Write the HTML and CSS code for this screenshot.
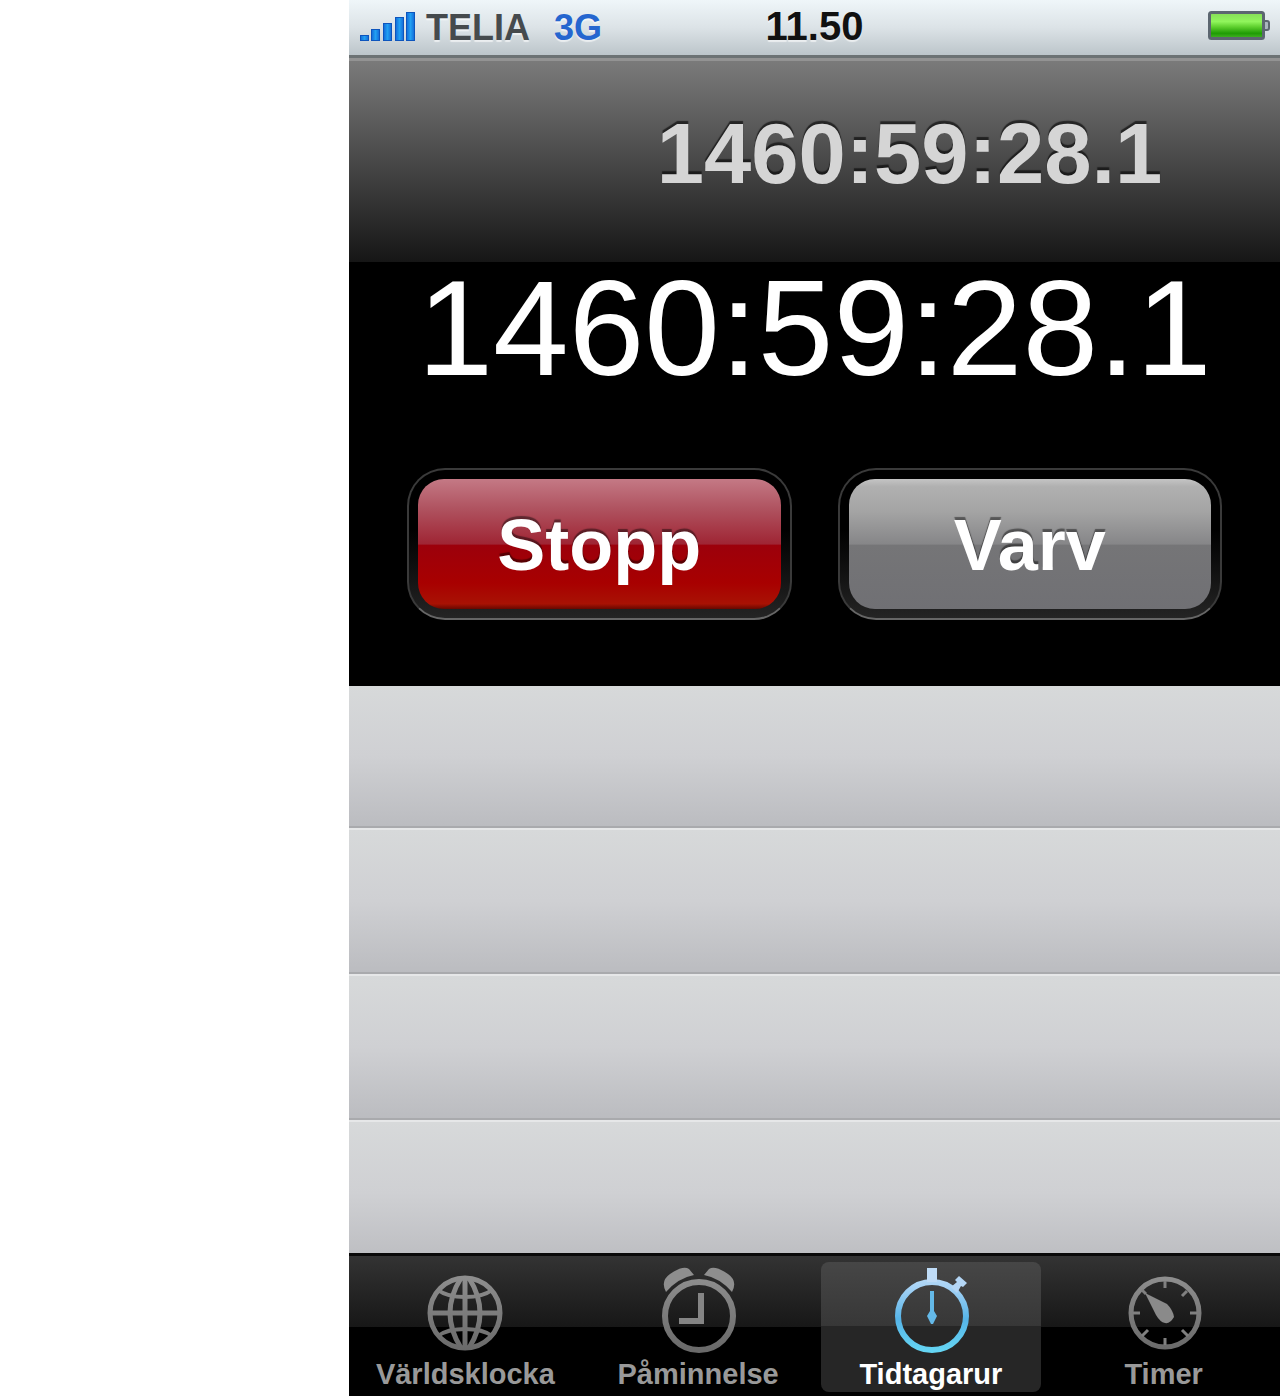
FILE: index.html
```html
<!DOCTYPE html>
<html lang="sv">
<head>
    <meta charset="UTF-8">
    <meta name="viewport" content="width=device-width, initial-scale=1.0">
    <title>Tidtagarur</title>
    <link rel="stylesheet" href="styles.css">
</head>
<body>
    <div class="phone">
        <div class="status-bar">
            <div class="carrier">
                <svg class="signal" width="57" height="34" viewBox="0 0 57 34" aria-hidden="true">
                    <defs>
                        <linearGradient id="signalFill" x1="0" y1="0" x2="1" y2="0">
                            <stop offset="0" stop-color="#1169d8"/>
                            <stop offset="0.5" stop-color="#22a0f2"/>
                            <stop offset="1" stop-color="#1169d8"/>
                        </linearGradient>
                    </defs>
                    <g fill="url(#signalFill)" stroke="#0d55bd" stroke-width="1">
                        <rect x="1.5" y="24.5" width="8" height="5"/>
                        <rect x="12.5" y="18.5" width="8" height="11"/>
                        <rect x="24.5" y="12.5" width="8" height="17"/>
                        <rect x="36.5" y="6.5" width="8" height="23"/>
                        <rect x="47.5" y="1.5" width="8" height="28"/>
                    </g>
                </svg>
                <span class="carrier-name">TELIA</span>
                <span class="network">3G</span>
            </div>
            <div class="clock">11.50</div>
            <svg class="battery" width="62" height="30" viewBox="0 0 62 30" aria-hidden="true">
                <defs>
                    <linearGradient id="batteryFill" x1="0" y1="0" x2="0" y2="1">
                        <stop offset="0" stop-color="#86dc58"/>
                        <stop offset="0.35" stop-color="#90f55c"/>
                        <stop offset="0.55" stop-color="#5fd02f"/>
                        <stop offset="0.8" stop-color="#1f9c04"/>
                        <stop offset="1" stop-color="#48b52a"/>
                    </linearGradient>
                </defs>
                <rect x="1.5" y="1.5" width="54" height="26" rx="2" fill="url(#batteryFill)" stroke="#5c6670" stroke-width="3"/>
                <path d="M57 10h2q2 0 2 2v5q0 2-2 2h-2" fill="#aab6be" stroke="#5c6670" stroke-width="2"/>
            </svg>
        </div>

        <header class="nav-bar">
            <h1>1460:59:28.1</h1>
        </header>

        <main class="stopwatch">
            <div class="time">1460:59:28.1</div>
            <div class="controls">
                <button type="button" class="btn btn-stop"><span class="btn-face">Stopp</span></button>
                <button type="button" class="btn btn-lap"><span class="btn-face">Varv</span></button>
            </div>
        </main>

        <ol class="laps">
            <li></li>
            <li></li>
            <li></li>
            <li></li>
        </ol>

        <nav class="tab-bar">
            <a href="#world" class="tab">
                <svg width="80" height="90" viewBox="0 0 80 90" aria-hidden="true">
                    <defs>
                        <linearGradient id="gray" gradientUnits="userSpaceOnUse" x1="0" y1="0" x2="0" y2="84">
                            <stop offset="0" stop-color="#949494"/>
                            <stop offset="1" stop-color="#6a6a6a"/>
                        </linearGradient>
                    </defs>
                    <g fill="none" stroke="url(#gray)" stroke-width="5">
                        <circle cx="40" cy="47" r="35"/>
                        <path d="M36 12Q14 47 36 82M44 12Q66 47 44 82"/>
                        <path d="M40 12L40.01 82M5 47L75 47.01"/>
                        <path d="M13 24Q22 31 40 31Q58 31 67 24M13 70Q22 63 40 63Q58 63 67 70" stroke-width="4"/>
                    </g>
                </svg>
                <span>Världsklocka</span>
            </a>
            <a href="#alarm" class="tab">
                <svg width="80" height="90" viewBox="0 0 80 90" aria-hidden="true">
                    <circle cx="41" cy="50" r="34" fill="none" stroke="url(#gray)" stroke-width="6"/>
                    <path d="M43 27V55H21" fill="none" stroke="#858585" stroke-width="6"/>
                    <path d="M8 26Q2 15 12 8Q25-1 31 3L36 9Q20 12 8 26Z" fill="#8e8e8e"/>
                    <path d="M74 26Q80 15 70 8Q57-1 51 3L46 9Q62 12 74 26Z" fill="#8e8e8e"/>
                </svg>
                <span>Påminnelse</span>
            </a>
            <a href="#stopwatch" class="tab tab-active" aria-current="page">
                <svg width="80" height="90" viewBox="0 0 80 90" aria-hidden="true">
                    <defs>
                        <linearGradient id="blue" gradientUnits="userSpaceOnUse" x1="0" y1="0" x2="0" y2="88">
                            <stop offset="0" stop-color="#c9e2f8"/>
                            <stop offset="0.25" stop-color="#a5d2f5"/>
                            <stop offset="0.6" stop-color="#56b4e8"/>
                            <stop offset="1" stop-color="#66d8f4"/>
                        </linearGradient>
                    </defs>
                    <circle cx="41" cy="50" r="34" fill="none" stroke="url(#blue)" stroke-width="6"/>
                    <path d="M36 2h10v14H36z" fill="#bfdcf7"/>
                    <path d="M60 21L66 16L64 14L68 10L76 17L72 21L70 20L66 27Z" fill="#b4d6f5"/>
                    <path d="M39 25h4v20l3 5-4 8h-2l-4-8 3-5z" fill="#64b9e8"/>
                </svg>
                <span>Tidtagarur</span>
            </a>
            <a href="#timer" class="tab">
                <svg width="80" height="90" viewBox="0 0 80 90" aria-hidden="true">
                    <circle cx="41" cy="47" r="34" fill="none" stroke="url(#gray)" stroke-width="5"/>
                    <path d="M41 15v7M41 72v7M9 47h7M66 47h7M18 24l4 4M58 30l5-5M18 70l6-6M58 64l6 6" fill="none" stroke="#808080" stroke-width="3"/>
                    <path d="M21 27L43 38Q49 44 50 51Q46 58 41 57Q36 56 32 49Z" fill="#8a8a8a"/>
                </svg>
                <span>Timer</span>
            </a>
        </nav>
    </div>
</body>
</html>
```

FILE: styles.css
```css
* {
    margin: 0;
    padding: 0;
    box-sizing: border-box;
}

body {
    font-family: "Liberation Sans", Arial, Helvetica, sans-serif;
    background: white;
    padding-left: 349px;
}

.phone {
    display: flex;
    flex-direction: column;
    height: 100vh;
    min-height: 960px;
    background: black;
    overflow: hidden;
}

/* Status bar */
.status-bar {
    display: grid;
    grid-template-columns: 1fr auto 1fr;
    align-items: center;
    height: 58px;
    padding: 0 10px 4px;
    background: linear-gradient(#eff6f9, #dce3e7 50%, #bcc5ca);
    border-bottom: 3px solid #6c7274;
}

.carrier {
    display: flex;
    align-items: center;
    gap: 10px;
    padding-top: 4px;
    font-size: 36px;
    line-height: 40px;
    font-weight: bold;
    text-shadow: 0 2px 1px rgba(255, 255, 255, 0.6);
}

.carrier-name {
    color: #454a4d;
}

.network {
    margin-left: 14px;
    color: #2566cf;
}

.clock {
    color: #111;
    font-size: 40px;
    line-height: 44px;
    font-weight: bold;
    text-shadow: 0 2px 1px rgba(255, 255, 255, 0.6);
}

.battery {
    justify-self: end;
}

/* Title bar */
.nav-bar {
    height: 204px;
    padding: 45px 0 0 190px;
    background: linear-gradient(#7a7a7a, #161616);
    border-top: 3px solid #939393;
    text-align: center;
}

.nav-bar h1 {
    color: #d5d5d5;
    font-size: 85px;
    line-height: 96px;
    text-shadow: 0 -3px 1px rgba(0, 0, 0, 0.6);
}

/* Stopwatch */
.stopwatch {
    height: 424px;
    padding: 0 58px;
}

.time {
    color: white;
    font-size: 136px;
    line-height: 132px;
    text-align: center;
    white-space: nowrap;
}

.controls {
    display: grid;
    grid-template-columns: 1fr 1fr;
    gap: 46px;
    margin-top: 74px;
}

.btn {
    height: 152px;
    padding: 9px;
    border: 2px solid #3a3a3a;
    border-bottom-color: #666;
    border-radius: 38px;
    background: linear-gradient(black 40%, #242424);
    font-family: inherit;
    cursor: pointer;
}

.btn-face {
    display: block;
    height: 130px;
    border-radius: 26px;
    color: white;
    font-size: 72px;
    line-height: 132px;
    font-weight: bold;
    text-shadow: 0 -3px 1px rgba(0, 0, 0, 0.45);
}

.btn-stop .btn-face {
    background: linear-gradient(#c47985, #b05461 22%, #9f2534 50%, #9c000b 51%, #a80000 80%, #a81204 96%, #680800);
}

.btn-lap .btn-face {
    background: linear-gradient(#c4c4c4, #b0b0b0 6%, #a4a4a4 25%, #868688 50%, #757577 51%, #707074);
}

/* Laps */
.laps {
    flex: 1;
    display: flex;
    flex-direction: column;
    list-style: none;
    overflow: hidden;
}

.laps li {
    flex: 0 0 146px;
    background: linear-gradient(#d7d9da, #cfd0d3 50%, #bbbcc0);
    border-top: 2px solid #e6e7e8;
    border-bottom: 2px solid #a9aaad;
}

.laps li:first-child {
    flex-basis: 142px;
    border-top: none;
}

/* Tab bar */
.tab-bar {
    display: grid;
    grid-template-columns: repeat(4, 1fr);
    height: 143px;
    padding: 6px 0 5px;
    background: linear-gradient(#333, #171717) 0 0 / 100% 71px no-repeat black;
    border-top: 3px solid #090909;
}

.tab {
    display: flex;
    flex-direction: column;
    align-items: center;
    margin: 0 6px;
    padding-top: 4px;
    border-radius: 8px;
    color: #999;
    font-size: 29px;
    line-height: 36px;
    font-weight: bold;
    text-decoration: none;
}

.tab-active {
    background: linear-gradient(#464646, #373737 64px, #262626 64px);
    color: white;
}
```
